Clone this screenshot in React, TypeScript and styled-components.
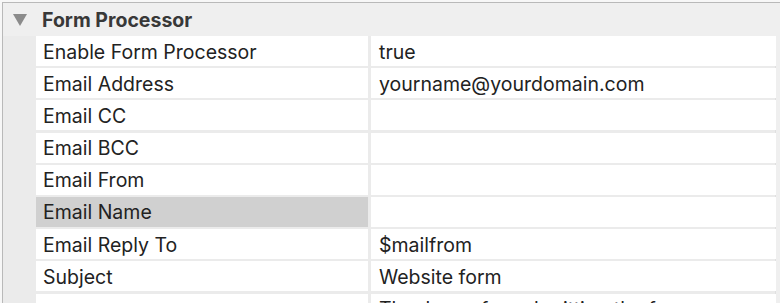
import React from "react";
import styled, { createGlobalStyle } from "styled-components";

const Global = createGlobalStyle`
  html, body { margin: 0; padding: 0; background: #f7f7f7; }
  body { font-family: "Inter", "Liberation Sans", sans-serif; }
`;

const Panel = styled.div`
  margin: 2px 0 0 2px;
  height: 301px;
  box-sizing: border-box;
  border-top: 1px solid #b9b9b9;
  border-left: 1px solid #b9b9b9;
  background: #efefef;
  overflow: hidden;
  display: flex;
  flex-direction: column;
`;

const Header = styled.div`
  height: 33px;
  display: flex;
  align-items: center;
  padding-left: 10px;
  gap: 15px;
  flex-shrink: 0;
`;

const Disclosure = styled.svg`
  width: 14px;
  height: 12px;
  flex-shrink: 0;
`;

const Title = styled.span`
  font-weight: 700;
  font-size: 19.5px;
  color: #383838;
  padding-top: 1px;
`;

const Grid = styled.div`
  display: grid;
  grid-template-columns: 332px 405px;
  grid-auto-rows: 30px;
  column-gap: 3px;
  row-gap: 2.2px;
  padding-left: 33px;
  margin-right: 4px;
  background: #ebebeb;
  border-right: 1px solid #e0e0e0;
`;

const Cell = styled.div<{ $selected?: boolean; $value?: boolean }>`
  background: ${(p) => (p.$selected ? "#d0d0d0" : "#ffffff")};
  display: flex;
  align-items: center;
  padding-left: ${(p) => (p.$value ? "8px" : "7px")};
  padding-top: 1px;
  font-size: 19.5px;
  color: #222222;
  white-space: nowrap;
  overflow: hidden;
`;

const rows: [string, string][] = [
  ["Enable Form Processor", "true"],
  ["Email Address", "yourname@yourdomain.com"],
  ["Email CC", ""],
  ["Email BCC", ""],
  ["Email From", ""],
  ["Email Name", ""],
  ["Email Reply To", "$mailfrom"],
  ["Subject", "Website form"],
  ["", "Thank you for submitting the form"],
];

export default function App() {
  return (
    <>
      <Global />
      <Panel>
        <Header>
          <Disclosure viewBox="0 0 14 12">
            <path d="M0 0 H14 L7 12 Z" fill="#8b8b8b" />
          </Disclosure>
          <Title>Form Processor</Title>
        </Header>
        <Grid>
          {rows.map(([label, value], i) => (
            <React.Fragment key={i}>
              <Cell $selected={label === "Email Name"}>{label}</Cell>
              <Cell $value>{value}</Cell>
            </React.Fragment>
          ))}
        </Grid>
      </Panel>
    </>
  );
}
